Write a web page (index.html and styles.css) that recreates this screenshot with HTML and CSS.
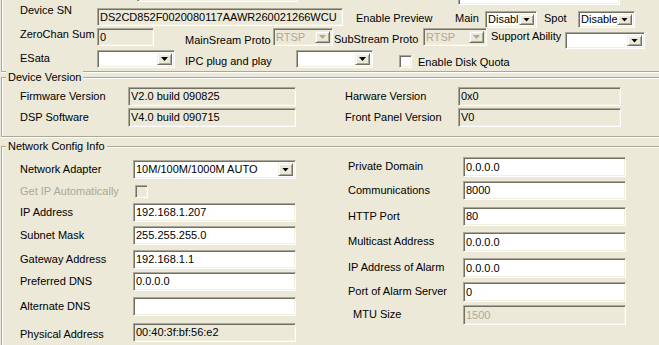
FILE: index.html
```html
<!DOCTYPE html>
<html lang="en">
<head>
    <meta charset="UTF-8">
    <meta name="viewport" content="width=device-width, initial-scale=1.0">
    <title>Device Parameters</title>
    <link rel="stylesheet" href="styles.css">
</head>
<body>
    <!-- General settings (top part is scrolled out of view) -->
    <div class="general">
        <div class="row row-cut">
            <div class="combo cut-combo"><span class="val"></span><span class="drop"></span></div>
            <div class="edit white cut-edit"></div>
        </div>

        <div class="row row-sn">
            <span class="lbl first sn-lbl">Device SN</span>
            <div class="edit sn-box">DS2CD852F0020080117AAWR260021266WCU</div>
            <span class="lbl preview-lbl">Enable Preview</span>
            <span class="lbl main-lbl">Main</span>
            <div class="combo main-combo"><span class="val">Disabl</span><span class="drop"></span></div>
            <span class="lbl spot-lbl">Spot</span>
            <div class="combo spot-combo"><span class="val">Disable</span><span class="drop"></span></div>
        </div>

        <div class="row row-zero">
            <span class="lbl first">ZeroChan Sum</span>
            <div class="edit zero-box">0</div>
            <span class="lbl main-proto-lbl">MainSream Proto</span>
            <div class="combo disabled main-proto"><span class="val">RTSP</span><span class="drop"></span></div>
            <span class="lbl sub-proto-lbl">SubStream Proto</span>
            <div class="combo disabled sub-proto"><span class="val">RTSP</span><span class="drop"></span></div>
            <span class="lbl ability-lbl">Support Ability</span>
            <div class="combo ability-combo"><span class="val"></span><span class="drop"></span></div>
        </div>

        <div class="row row-esata">
            <span class="lbl first esata-lbl">ESata</span>
            <div class="combo esata-combo"><span class="val"></span><span class="drop"></span></div>
            <span class="lbl ipc-lbl">IPC plug and play</span>
            <div class="combo ipc-combo"><span class="val"></span><span class="drop"></span></div>
            <span class="check quota-check"></span>
            <span class="lbl quota-lbl">Enable Disk Quota</span>
        </div>
    </div>

    <!-- Device Version -->
    <div class="group version">
        <div class="group-title">Device Version</div>
        <div class="version-grid">
            <span class="vlbl">Firmware Version</span>
            <div class="edit">V2.0 build 090825</div>
            <span class="vlbl right">Harware Version</span>
            <div class="edit">0x0</div>

            <span class="vlbl">DSP Software</span>
            <div class="edit">V4.0 build 090715</div>
            <span class="vlbl right">Front Panel Version</span>
            <div class="edit">V0</div>
        </div>
    </div>

    <!-- Network Config Info -->
    <div class="group network">
        <div class="group-title">Network Config Info</div>
        <div class="net-cols">
            <div class="net-left">
                <span class="nlbl">Network Adapter</span>
                <div class="combo net-combo"><span class="val">10M/100M/1000M AUTO</span><span class="drop"></span></div>

                <span class="nlbl small disabled-text">Get IP Automatically</span>
                <span class="check disabled dhcp-check"></span>

                <span class="nlbl">IP Address</span>
                <div class="edit white">192.168.1.207</div>

                <span class="nlbl">Subnet Mask</span>
                <div class="edit white">255.255.255.0</div>

                <span class="nlbl">Gateway Address</span>
                <div class="edit white">192.168.1.1</div>

                <span class="nlbl">Preferred DNS</span>
                <div class="edit white">0.0.0.0</div>

                <span class="nlbl">Alternate DNS</span>
                <div class="edit white"></div>

                <span class="nlbl low">Physical Address</span>
                <div class="edit">00:40:3f:bf:56:e2</div>
            </div>

            <div class="net-right">
                <span class="nlbl">Private Domain</span>
                <div class="edit white tall">0.0.0.0</div>

                <span class="nlbl">Communications</span>
                <div class="edit white">8000</div>

                <span class="nlbl">HTTP Port</span>
                <div class="edit white">80</div>

                <span class="nlbl">Multicast Address</span>
                <div class="edit white tall">0.0.0.0</div>

                <span class="nlbl">IP Address of Alarm</span>
                <div class="edit white tall">0.0.0.0</div>

                <span class="nlbl">Port of Alarm Server</span>
                <div class="edit white tall">0</div>

                <span class="nlbl mtu">MTU Size</span>
                <div class="edit tall disabled-text">1500</div>
            </div>
        </div>
    </div>
</body>
</html>
```

FILE: styles.css
```css
* {
    margin: 0;
    padding: 0;
    box-sizing: border-box;
}

body {
    width: 659px;
    height: 345px;
    overflow: hidden;
    background-color: #ece9d8;
    color: #000;
    font-family: "Liberation Sans", Arial, sans-serif;
    font-size: 11px;
}

/* common controls */
.lbl {
    line-height: 13px;
    white-space: nowrap;
}

.disabled-text {
    color: #aca899;
}

.edit {
    height: 19px;
    line-height: 17px;
    padding-left: 2px;
    background-color: #ece9d8;
    border: 1px solid;
    border-color: #aca899 #fff #fff #aca899;
    box-shadow: inset 1px 1px 0 #716f64, inset -1px -1px 0 #f1efe2;
    white-space: nowrap;
    overflow: hidden;
}

.edit.white {
    background-color: #fff;
}

.edit.tall {
    height: 20px;
    line-height: 18px;
}

.combo {
    display: flex;
    height: 18px;
    padding: 2px;
    background-color: #fff;
    border: 1px solid;
    border-color: #aca899 #fff #fff #aca899;
    box-shadow: inset 1px 1px 0 #716f64, inset -1px -1px 0 #f1efe2;
}

.combo .val {
    flex: 1;
    line-height: 12px;
    white-space: nowrap;
    overflow: hidden;
}

.combo .drop {
    width: 15px;
    display: flex;
    align-items: center;
    justify-content: center;
    background-color: #ece9d8;
    border: 1px solid;
    border-color: #f1efe2 #716f64 #716f64 #f1efe2;
    box-shadow: inset 1px 1px 0 #fff, inset -1px -1px 0 #aca899;
}

.combo .drop::after {
    content: "";
    width: 7px;
    height: 4px;
    background-color: #000;
    clip-path: polygon(0 0, 100% 0, 50% 100%);
}

.combo.disabled {
    background-color: #ece9d8;
    color: #aca899;
}

.combo.disabled .drop::after {
    background-color: #aca899;
}

.check {
    width: 13px;
    height: 13px;
    background-color: #fff;
    border: 1px solid;
    border-color: #aca899 #fff #fff #aca899;
    box-shadow: inset 1px 1px 0 #716f64, inset -1px -1px 0 #f1efe2;
}

.check.disabled {
    background-color: #ece9d8;
}

/* top section */
.general {
    display: flex;
    flex-direction: column;
    height: 72px;
    margin-left: 1px;
    border-left: 1px solid #aca899;
    border-bottom: 1px solid #aca899;
    box-shadow: inset 1px 0 0 #fff, 0 1px 0 #fff;
}

.row {
    display: flex;
    align-items: flex-start;
    padding-left: 18px;
    flex-shrink: 0;
}

.row-cut {
    margin-top: -15px;
    height: 20px;
}

.row-sn {
    margin-top: 3px;
    height: 20px;
}

.row-zero {
    height: 21px;
}

.row-esata {
    height: 20px;
}

.lbl.first {
    width: 77px;
}

.cut-combo {
    margin-left: 117px;
    width: 161px;
    height: 17px;
}

.cut-edit {
    margin-left: 160px;
    width: 162px;
    height: 20px;
}

.sn-lbl {
    margin-top: -4px;
}

.sn-box {
    width: 246px;
    height: 18px;
    line-height: 16px;
}

.preview-lbl {
    margin: 4px 0 0 13px;
    width: 99px;
}

.main-lbl {
    margin-top: 4px;
    width: 30px;
}

.main-combo {
    margin-top: 3px;
    width: 52px;
    height: 17px;
}

.spot-lbl {
    margin: 4px 0 0 7px;
    width: 34px;
}

.spot-combo {
    margin-top: 3px;
    width: 57px;
    height: 17px;
}

.main-combo .val,
.spot-combo .val,
.ability-combo .val {
    line-height: 11px;
}

.zero-box {
    width: 57px;
    height: 18px;
    line-height: 16px;
}

.main-proto-lbl {
    margin: 6px 0 0 31px;
    width: 88px;
}

.main-proto {
    width: 60px;
}

.sub-proto-lbl {
    margin: 5px 0 0 1px;
    width: 89px;
}

.sub-proto {
    width: 64px;
}

.ability-lbl {
    margin: 2px 0 0 4px;
    width: 74px;
}

.ability-combo {
    margin-top: 4px;
    width: 80px;
    height: 17px;
}

.esata-lbl {
    margin-top: 3px;
}

.esata-combo {
    margin-top: 1px;
    width: 78px;
}

.ipc-lbl {
    margin: 6px 0 0 10px;
    width: 111px;
}

.ipc-combo {
    margin-top: 1px;
    width: 77px;
}

.quota-check {
    margin: 6px 0 0 26px;
}

.quota-lbl {
    margin: 7px 0 0 6px;
}

/* group boxes */
.group {
    margin-left: 1px;
    border: 1px solid #aca899;
    border-right: none;
    box-shadow: inset 1px 1px 0 #fff, 0 1px 0 #fff;
}

.group-title {
    width: max-content;
    margin: -7px 0 0 4px;
    padding: 0 2px;
    line-height: 13px;
    background-color: #ece9d8;
}

.version {
    margin-top: 5px;
    height: 60px;
}

.version-grid {
    display: grid;
    grid-template-columns: 108px 168px 162px 163px;
    grid-template-rows: 19px 19px;
    row-gap: 2px;
    margin: 3px 0 0 18px;
}

.vlbl {
    line-height: 19px;
    white-space: nowrap;
}

.vlbl.right {
    padding-left: 49px;
}

.network {
    margin-top: 9px;
    height: 199px;
    border-bottom: none;
}

.net-cols {
    display: flex;
    align-items: flex-start;
}

.net-left {
    display: grid;
    grid-template-columns: 113px 163px;
    grid-template-rows: 25px 18px 23px 24px 22px 25px 26px 20px;
    align-items: start;
    margin: 7px 0 0 18px;
}

.net-right {
    display: grid;
    grid-template-columns: 115px 163px;
    grid-template-rows: 24px 26px 25px 26px 24px 23px 20px;
    align-items: start;
    margin: 4px 0 0 52px;
}

.nlbl {
    line-height: 19px;
    white-space: nowrap;
}

.nlbl.small {
    line-height: 13px;
}

.nlbl.low {
    line-height: 22px;
}

.nlbl.mtu {
    padding-left: 5px;
}

.net-combo {
    height: 19px;
}

.net-combo .val {
    line-height: 13px;
}

.dhcp-check {
    margin-left: 2px;
}
```
